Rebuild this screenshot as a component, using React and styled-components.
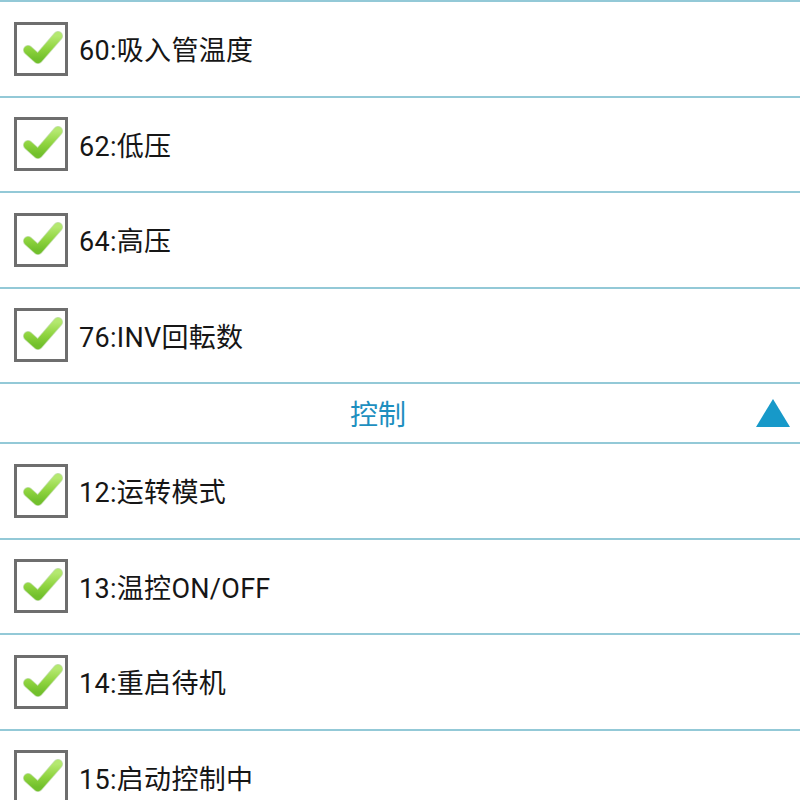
import React from 'react';
import styled, { createGlobalStyle } from 'styled-components';

const GlobalStyle = createGlobalStyle`
  html, body {
    margin: 0;
    padding: 0;
    background: #ffffff;
  }
  body {
    font-family: Roboto, "Noto Sans CJK SC", "Noto Sans CJK JP", sans-serif;
  }
`;

const ListUI = styled.div`
  display: flex;
  flex-direction: column;
  width: 800px;
  border-top: 2px solid #93c9d7;
`;

const RowUI = styled.div`
  display: flex;
  align-items: center;
  height: 93.5px;
  padding-left: 14px;
  border-bottom: 2px solid #93c9d7;
  box-sizing: content-box;
`;

const BoxUI = styled.div`
  width: 54px;
  height: 54px;
  box-sizing: border-box;
  border: 3px solid #6e6e6e;
  background: #ffffff;
  display: flex;
  flex-shrink: 0;
`;

const LabelUI = styled.span`
  margin-left: 11px;
  font-size: 27px;
  font-weight: 400;
  color: #161616;
  font-family: Roboto, "Noto Sans CJK SC", "Noto Sans CJK JP", sans-serif;
  letter-spacing: 0.3px;
`;

const HeaderUI = styled.div`
  display: flex;
  align-items: center;
  height: 58px;
  padding-right: 10px;
  border-bottom: 2px solid #93c9d7;
`;

const HeaderTextUI = styled.span`
  flex: 1;
  text-align: center;
  font-size: 28px;
  font-weight: 400;
  color: #1d8fbf;
  font-family: "Noto Sans CJK SC", sans-serif;
`;

const Check = () => (
  <svg width="48" height="48" viewBox="0 0 48 48">
    <defs>
      <linearGradient id="g" x1="0" y1="0" x2="0" y2="1">
        <stop offset="0" stopColor="#b4e870" />
        <stop offset="0.55" stopColor="#8fd43f" />
        <stop offset="1" stopColor="#72c02c" />
      </linearGradient>
    </defs>
    <polyline
      points="11,25 21,34 41,11"
      fill="none"
      stroke="#6fae3a"
      strokeWidth="10"
      strokeLinecap="round"
      strokeLinejoin="round"
      opacity="0.4"
    />
    <polyline
      points="11,25 21,34 41,11"
      fill="none"
      stroke="url(#g)"
      strokeWidth="8.5"
      strokeLinecap="round"
      strokeLinejoin="round"
    />
  </svg>
);

const Item = ({ label }) => (
  <RowUI>
    <BoxUI>
      <Check />
    </BoxUI>
    <LabelUI>{label}</LabelUI>
  </RowUI>
);

const top = ['60:吸入管温度', '62:低压', '64:高压', '76:INV回転数'];
const control = ['12:运转模式', '13:温控ON/OFF', '14:重启待机', '15:启动控制中'];

export default function App() {
  return (
    <>
      <GlobalStyle />
      <ListUI>
        {top.map((t) => (
          <Item key={t} label={t} />
        ))}
        <HeaderUI>
          <HeaderTextUI>控制</HeaderTextUI>
          <svg width="34" height="28" viewBox="0 0 34 28">
            <polygon points="17,0 34,28 0,28" fill="#1799c9" />
          </svg>
        </HeaderUI>
        {control.map((t) => (
          <Item key={t} label={t} />
        ))}
      </ListUI>
    </>
  );
}
